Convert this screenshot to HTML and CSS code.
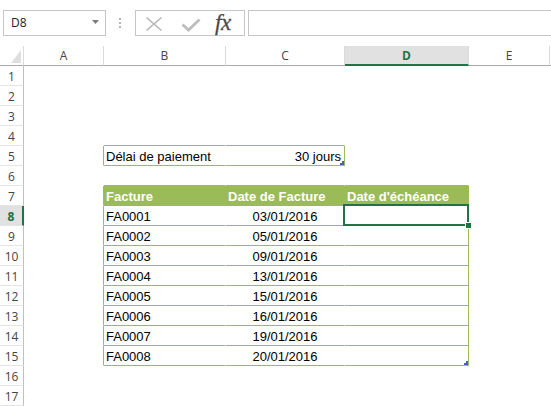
FILE: index.html
```html
<!DOCTYPE html>
<html lang="fr">
<head>
<meta charset="utf-8">
<title>Factures</title>
<link rel="stylesheet" href="styles.css">
</head>
<body>
<div class="app">
  <div class="fbar">
    <div class="namebox">
      <span class="ref">D8</span>
      <svg class="dd" width="7" height="4" viewBox="0 0 7 4"><path d="M0 0H7L3.5 4Z" fill="#7a7a7a"/></svg>
    </div>
    <svg class="grip" width="2" height="10" viewBox="0 0 2 10"><rect x="0" y="0" width="2" height="2" fill="#b3b3b3"/><rect x="0" y="4" width="2" height="2" fill="#b3b3b3"/><rect x="0" y="8" width="2" height="2" fill="#b3b3b3"/></svg>
    <div class="tools">
      <svg class="cancel" width="18" height="16" viewBox="0 0 18 16"><path d="M1.5 1.5L16.5 14.5M16.5 1.5L1.5 14.5" stroke="#b6b6b6" stroke-width="1.6" fill="none"/></svg>
      <svg class="enter" width="20" height="14" viewBox="0 0 20 14"><path d="M1.5 6.5L7.5 12L18.5 1.5" stroke="#bdbdbd" stroke-width="2.8" fill="none"/></svg>
      <span class="fx">fx</span>
    </div>
    <div class="finput"></div>
  </div>

  <div class="sheet">
    <div class="corner"></div><div class="ch">A</div><div class="ch">B</div><div class="ch">C</div><div class="ch sel">D</div><div class="ch">E</div><div class="ch"></div>

    <div class="rh">1</div><div class="c"></div><div class="c"></div><div class="c"></div><div class="c"></div><div class="c"></div><div class="c"></div>
    <div class="rh">2</div><div class="c"></div><div class="c"></div><div class="c"></div><div class="c"></div><div class="c"></div><div class="c"></div>
    <div class="rh">3</div><div class="c"></div><div class="c"></div><div class="c"></div><div class="c"></div><div class="c"></div><div class="c"></div>
    <div class="rh">4</div><div class="c"></div><div class="c tb-b"></div><div class="c tb-b"></div><div class="c"></div><div class="c"></div><div class="c"></div>
    <div class="rh">5</div><div class="c tb-r"></div><div class="c tb-b">Délai de paiement</div><div class="c tb-b tb-r right handle">30 jours</div><div class="c"></div><div class="c"></div><div class="c"></div>
    <div class="rh">6</div><div class="c"></div><div class="c tb-b"></div><div class="c tb-b"></div><div class="c tb-b"></div><div class="c"></div><div class="c"></div>
    <div class="rh">7</div><div class="c tb-r"></div><div class="c th tb-b">Facture</div><div class="c th tb-b hright">Date de Facture</div><div class="c th tb-b tb-r">Date d'échéance</div><div class="c"></div><div class="c"></div>
    <div class="rh sel">8</div><div class="c tb-r"></div><div class="c tb-b">FA0001</div><div class="c tb-b num">03/01/2016</div><div class="c tb-b tb-r active"></div><div class="c"></div><div class="c"></div>
    <div class="rh">9</div><div class="c tb-r"></div><div class="c tb-b">FA0002</div><div class="c tb-b num">05/01/2016</div><div class="c tb-b tb-r"></div><div class="c"></div><div class="c"></div>
    <div class="rh">10</div><div class="c tb-r"></div><div class="c tb-b">FA0003</div><div class="c tb-b num">09/01/2016</div><div class="c tb-b tb-r"></div><div class="c"></div><div class="c"></div>
    <div class="rh">11</div><div class="c tb-r"></div><div class="c tb-b">FA0004</div><div class="c tb-b num">13/01/2016</div><div class="c tb-b tb-r"></div><div class="c"></div><div class="c"></div>
    <div class="rh">12</div><div class="c tb-r"></div><div class="c tb-b">FA0005</div><div class="c tb-b num">15/01/2016</div><div class="c tb-b tb-r"></div><div class="c"></div><div class="c"></div>
    <div class="rh">13</div><div class="c tb-r"></div><div class="c tb-b">FA0006</div><div class="c tb-b num">16/01/2016</div><div class="c tb-b tb-r"></div><div class="c"></div><div class="c"></div>
    <div class="rh">14</div><div class="c tb-r"></div><div class="c tb-b">FA0007</div><div class="c tb-b num">19/01/2016</div><div class="c tb-b tb-r"></div><div class="c"></div><div class="c"></div>
    <div class="rh">15</div><div class="c tb-r"></div><div class="c tb-b">FA0008</div><div class="c tb-b num">20/01/2016</div><div class="c tb-b tb-r handle"></div><div class="c"></div><div class="c"></div>
    <div class="rh">16</div><div class="c"></div><div class="c"></div><div class="c"></div><div class="c"></div><div class="c"></div><div class="c"></div>
    <div class="rh">17</div><div class="c"></div><div class="c"></div><div class="c"></div><div class="c"></div><div class="c"></div><div class="c"></div>
  </div>
</div>
</body>
</html>
```

FILE: styles.css
```css
html, body {
  margin: 0;
  padding: 0;
  background: #ffffff;
}

.app {
  width: 551px;
  height: 406px;
  overflow: hidden;
  background: #ffffff;
}

/* ---------- formula bar ---------- */
.fbar {
  box-sizing: border-box;
  height: 46px;
  padding: 10px 0 0 3px;
  display: flex;
  align-items: flex-start;
}

.namebox {
  box-sizing: border-box;
  width: 103px;
  height: 26px;
  border: 1px solid #c6c6c6;
  display: flex;
  align-items: center;
  padding: 0 6px 0 7px;
  font-family: "Open Sans", "Noto Sans", sans-serif;
  font-size: 12px;
  color: #222;
}

.namebox .ref {
  flex: 1;
  line-height: 24px;
}

.namebox .dd {
  display: block;
  margin-top: -2px;
}

.grip {
  display: block;
  margin: 8px 0 0 13px;
}

.tools {
  box-sizing: border-box;
  width: 110px;
  height: 26px;
  margin-left: 14px;
  border: 1px solid #c6c6c6;
  display: flex;
  align-items: center;
  padding-left: 9px;
}

.tools .cancel {
  display: block;
  margin-top: 2px;
}

.tools .enter {
  display: block;
  margin: 3px 0 0 18px;
}

.tools .fx {
  margin-left: 14px;
  font-family: "Liberation Serif", "DejaVu Serif", serif;
  font-style: italic;
  font-size: 23px;
  line-height: 24px;
  color: #4a4a4a;
  letter-spacing: -0.5px;
  -webkit-text-stroke: 0.3px #4a4a4a;
}

.finput {
  box-sizing: border-box;
  flex: 1;
  height: 26px;
  margin-left: 3px;
  border: 1px solid #c6c6c6;
  border-right: none;
}

/* ---------- sheet grid ---------- */
.sheet {
  display: grid;
  grid-template-columns: 24px 80px 122px 119px 124px 81px 1fr;
  grid-auto-rows: 20px;
}

.corner {
  box-sizing: border-box;
  border-right: 1px solid #dadada;
  border-bottom: 1px solid #ababab;
  position: relative;
}

.corner::after {
  content: "";
  position: absolute;
  right: 2px;
  bottom: 2px;
  width: 10px;
  height: 13px;
  background: #dfdfdf;
  clip-path: polygon(100% 0, 100% 100%, 0 100%);
}

.ch {
  box-sizing: border-box;
  border-right: 1px solid #dadada;
  border-bottom: 1px solid #ababab;
  text-align: center;
  font-family: "Open Sans", "Noto Sans", sans-serif;
  font-size: 12px;
  line-height: 19px;
  color: #444444;
}

.ch.sel {
  background: #e1e1e1;
  color: #217346;
  font-weight: bold;
  border-bottom: 2px solid #217346;
}

.rh {
  box-sizing: border-box;
  border-right: 1px solid #c0c0c0;
  border-bottom: 1px solid #e4e4e4;
  text-align: center;
  font-family: "Open Sans", "Noto Sans", sans-serif;
  font-size: 12px;
  line-height: 21px;
  color: #444444;
}

.rh.sel {
  background: #e1e1e1;
  color: #217346;
  font-weight: bold;
  border-right: 2px solid #217346;
}

.c {
  box-sizing: border-box;
  border-right: 1px solid transparent;
  border-bottom: 1px solid transparent;
  padding: 0 2px;
  font-family: "Liberation Sans", Arial, sans-serif;
  font-size: 13px;
  line-height: 21px;
  color: #000000;
  white-space: nowrap;
}

.tb-b {
  border-bottom-color: #9bbb59;
}

.tb-r {
  border-right-color: #9bbb59;
}

.th {
  background: #9bbb59;
  color: #ffffff;
  font-weight: bold;
}

.right {
  text-align: right;
  padding-right: 3px;
}

.hright {
  text-align: right;
  padding-right: 19px;
}

.num {
  text-align: center;
}

.handle {
  position: relative;
}

.handle::after {
  content: "";
  position: absolute;
  right: 0;
  bottom: 0;
  width: 4px;
  height: 4px;
  background: #4a62b4;
  clip-path: polygon(50% 0, 100% 0, 100% 100%, 0 100%, 0 50%, 50% 50%);
}

.active {
  position: relative;
}

.active::before {
  content: "";
  position: absolute;
  left: -2px;
  top: -2px;
  right: -1px;
  bottom: -1px;
  border: 2px solid #217346;
}

.active::after {
  content: "";
  position: absolute;
  right: -3px;
  bottom: -3px;
  width: 5px;
  height: 5px;
  background: #217346;
  outline: 1px solid #ffffff;
}
```
